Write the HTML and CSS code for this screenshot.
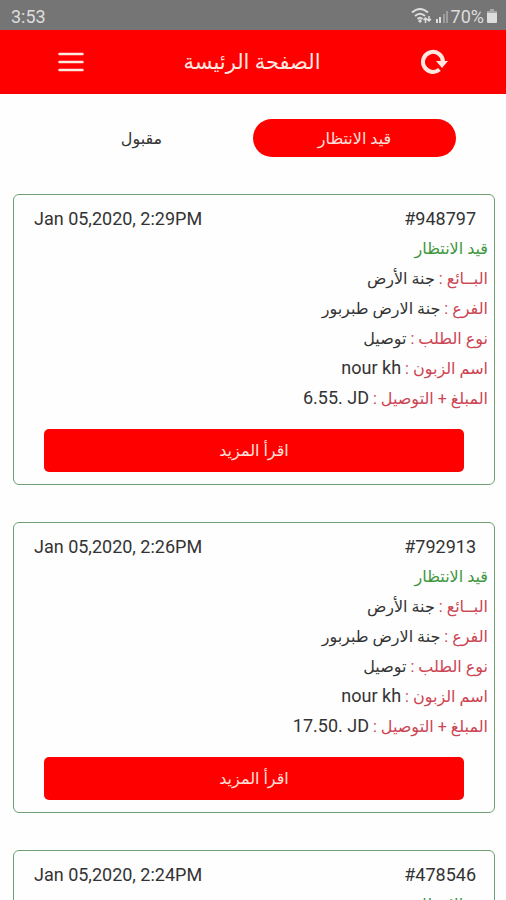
FILE: index.html
```html
<!DOCTYPE html>
<html lang="ar" dir="rtl">
  <head>
    <meta charset="UTF-8" />
    <meta name="viewport" content="width=device-width, initial-scale=1.0" />
    <title>الصفحة الرئيسة</title>
    <link rel="stylesheet" href="styles.css">
  </head>
  <body>
    <div class="app">
      <!-- status bar -->
      <div class="status-bar" dir="ltr">
        <span>3:53</span>
        <div class="status-icons">
          <svg width="22" height="18" viewBox="0 0 22 18" fill="none" stroke="currentColor" stroke-width="2">
            <path d="M1 5.500Q9 -1.500 17 5.500M4 9Q9 4.500 14 9M6.500 12Q9 9.500 11.500 12" />
            <path d="M9 12l2 2-2 2-2-2z" fill="currentColor" stroke="none" />
            <path d="M14.500 16v-5M12.500 13l2-2 2 2M18 9v5M16 12l2 2 2-2" stroke-width="1.500" />
          </svg>
          <svg width="14" height="16" viewBox="0 0 14 16" fill="currentColor">
            <path d="M1 11h2v4H1zM4 9h2v6H4z" />
            <path d="M8 6h2v9H8zM11 3h2v12h-2z" opacity="0.4" />
          </svg>
          <span>70%</span>
          <svg width="12" height="16" viewBox="0 0 12 16" fill="currentColor">
            <path d="M4 1h4v2h3v3H1V3h3z" opacity="0.5" />
            <path d="M1 5h10v9q0 1-1 1H2q-1 0-1-1z" />
          </svg>
        </div>
      </div>

      <!-- header -->
      <header class="header">
        <button class="icon-btn" type="button" aria-label="تحديث">
          <svg width="28" height="28" viewBox="0 0 28 28" fill="none">
            <path d="M19.500 21.500A10 10 0 1 1 23 13.500" stroke="currentColor" stroke-width="4" />
            <path d="M16 13h12l-6 7z" fill="currentColor" />
          </svg>
        </button>
        <h1 class="title">الصفحة الرئيسة</h1>
        <button class="icon-btn" type="button" aria-label="القائمة">
          <svg width="26" height="22" viewBox="0 0 26 22" stroke="currentColor" stroke-width="2.500" stroke-linecap="round">
            <path d="M1.500 3h23M1.500 11h23M1.500 19h23" />
          </svg>
        </button>
      </header>

      <!-- tabs -->
      <nav class="tabs">
        <button class="tab active" type="button">قيد الانتظار</button>
        <button class="tab" type="button">مقبول</button>
      </nav>

      <!-- orders -->
      <main class="orders">
        <article class="order">
          <div class="order-top">
            <span dir="ltr">#948797</span>
            <span dir="ltr">Jan 05,2020, 2:29PM</span>
          </div>
          <p class="row state">قيد الانتظار</p>
          <p class="row"><span class="label">البــائع :</span> جنة الأرض</p>
          <p class="row"><span class="label">الفرع :</span> جنة الارض طبربور</p>
          <p class="row"><span class="label">نوع الطلب :</span> توصيل</p>
          <p class="row"><span class="label">اسم الزبون :</span> <bdi>nour kh</bdi></p>
          <p class="row"><span class="label">المبلغ + التوصيل :</span> <span dir="ltr">6.55. JD</span></p>
          <button class="more" type="button">اقرأ المزيد</button>
        </article>

        <article class="order">
          <div class="order-top">
            <span dir="ltr">#792913</span>
            <span dir="ltr">Jan 05,2020, 2:26PM</span>
          </div>
          <p class="row state">قيد الانتظار</p>
          <p class="row"><span class="label">البــائع :</span> جنة الأرض</p>
          <p class="row"><span class="label">الفرع :</span> جنة الارض طبربور</p>
          <p class="row"><span class="label">نوع الطلب :</span> توصيل</p>
          <p class="row"><span class="label">اسم الزبون :</span> <bdi>nour kh</bdi></p>
          <p class="row"><span class="label">المبلغ + التوصيل :</span> <span dir="ltr">17.50. JD</span></p>
          <button class="more" type="button">اقرأ المزيد</button>
        </article>

        <article class="order">
          <div class="order-top">
            <span dir="ltr">#478546</span>
            <span dir="ltr">Jan 05,2020, 2:24PM</span>
          </div>
          <p class="row state">قيد الانتظار</p>
        </article>
      </main>
    </div>
  </body>
</html>
```

FILE: styles.css
```css
* {
  box-sizing: border-box;
}

body {
  margin: 0;
  background-color: #fefefe;
  color: #333;
  font-family: Roboto, "DejaVu Sans", sans-serif;
  font-size: 16px;
}

button {
  border: none;
  background: none;
  padding: 0;
  font-family: inherit;
  color: inherit;
  cursor: pointer;
}

svg {
  display: block;
}

.app {
  display: flex;
  flex-direction: column;
  height: 100vh;
  overflow: hidden;
}

.status-bar {
  display: flex;
  justify-content: space-between;
  align-items: center;
  flex: none;
  height: 30px;
  padding: 2px 8px 0 11px;
  background-color: #757575;
  color: #ddd;
  font-size: 18px;
}

.status-icons {
  display: flex;
  align-items: center;
  gap: 2px;
}

.header {
  display: flex;
  justify-content: space-between;
  align-items: center;
  flex: none;
  height: 64px;
  padding: 0 58px;
  background-color: #fe0000;
  color: #ffe8e0;
}

.title {
  margin: 0;
  font-size: 21px;
  font-weight: normal;
}

.icon-btn {
  display: flex;
}

.tabs {
  display: flex;
  flex: none;
  gap: 10px;
  padding: 25px 50px 0 40px;
}

.tab {
  flex: 1;
  height: 38px;
  border-radius: 19px;
  font-size: 16px;
}

.tab.active {
  background-color: #fe0000;
  color: #ffe0dc;
}

.orders {
  display: flex;
  flex-direction: column;
  gap: 37px;
  flex: 1;
  min-height: 0;
  padding: 37px 11px 0 13px;
  overflow: auto;
  scrollbar-width: none;
}

.order {
  flex: none;
  padding: 9px 6px 12px;
  border: 1px solid #6fa073;
  border-radius: 6px;
}

.order-top {
  display: flex;
  justify-content: space-between;
  padding: 0 12px 0 14px;
  font-size: 18px;
  line-height: 30px;
}

.row {
  margin: 0;
  line-height: 30px;
}

.row bdi,
.row [dir="ltr"] {
  font-size: 18px;
  line-height: 1;
}

.state {
  color: #3c963c;
}

.label {
  color: #cc4452;
}

.more {
  display: block;
  width: calc(100% - 48px);
  height: 43px;
  margin: 15px auto 0;
  border-radius: 5px;
  background-color: #fe0000;
  color: #ffe0dc;
  font-size: 16px;
}
```
